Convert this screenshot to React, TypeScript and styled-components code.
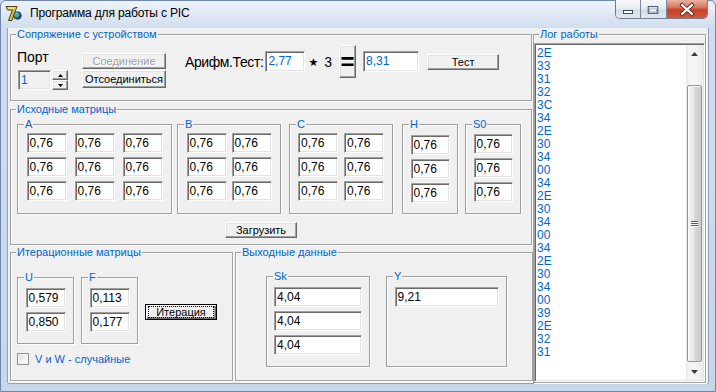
import styled, { createGlobalStyle, css } from "styled-components";

const BLUE = "#0066cc";
const FACE = "#f0f0f0";

const GlobalStyle = createGlobalStyle`
  * { box-sizing: border-box; }
  html, body { margin: 0; padding: 0; overflow: hidden; }
  body {
    font-family: "Liberation Sans", Arial, sans-serif;
    font-size: 11px;
    color: #000;
    background: #c9d9ee;
  }
`;

const sunken = css`
  border: 1px solid;
  border-color: #a0a0a0 #ffffff #ffffff #a0a0a0;
  box-shadow: inset 1px 1px 0 #696969, inset -1px -1px 0 #e3e3e3;
`;

const raised = css`
  border: 1px solid;
  border-color: #ffffff #696969 #696969 #ffffff;
  box-shadow: inset -1px -1px 0 #a0a0a0, inset 1px 1px 0 #e3e3e3;
  background: ${FACE};
`;

const matrices = [
  { name: "A", cols: 3, w: 155, ml: 0, gap: 8, top: 2 },
  { name: "B", cols: 2, w: 104, ml: 5, gap: 5, top: 2 },
  { name: "C", cols: 2, w: 104, ml: 8, gap: 6, top: 2 },
  { name: "H", cols: 1, w: 56, ml: 9, gap: 0, top: 4 },
  { name: "S0", cols: 1, w: 56, ml: 7, gap: 0, top: 3 },
];

const logLines = [
  "2E", "33", "31", "32", "3C", "34", "2E", "30", "34", "00", "34", "2E",
  "30", "34", "00", "34", "2E", "30", "34", "00", "39", "2E", "32", "31",
];

export default function App() {
  return (
    <>
      <GlobalStyle />
      <Window>
        <TitleBar>
          <AppIcon />
          <Title>Программа для работы с PIC</Title>
          <CaptionGroup>
            <CaptionButton $w={24}>
              <svg width="24" height="18" viewBox="0 0 24 18">
                <rect x="7.5" y="10.5" width="9" height="3" fill="#fff" stroke="#3d4b5e" />
              </svg>
            </CaptionButton>
            <CaptionButton $w={26}>
              <svg width="26" height="18" viewBox="0 0 26 18">
                <rect x="7.5" y="6.5" width="10" height="7" fill="none" stroke="#3d4b5e" />
                <rect x="9" y="9" width="7" height="3" fill="#fff" stroke="#8d9aad" strokeWidth="0.8" />
              </svg>
            </CaptionButton>
            <CaptionButton $w={41} $close>
              <svg width="41" height="18" viewBox="0 0 41 18">
                <path d="M15.5 5 L25.5 14 M25.5 5 L15.5 14" stroke="#5a2418" strokeWidth="4" strokeLinecap="square" />
                <path d="M15.5 5 L25.5 14 M25.5 5 L15.5 14" stroke="#fff" strokeWidth="2.2" strokeLinecap="square" />
              </svg>
            </CaptionButton>
          </CaptionGroup>
        </TitleBar>

        <Client>
          <LeftColumn>
            <Group $w={522} $h={73}>
              <Caption>Сопряжение с устройством</Caption>
              <ConnRow>
                <PortBlock>
                  <PortLabel>Порт</PortLabel>
                  <PortControls>
                    <TextBox $w={33} $h={20} $blue $disabled>
                      1
                    </TextBox>
                    <Spinner>
                      <SpinButton>
                        <svg width="5" height="3" viewBox="0 0 5 3">
                          <path d="M2.5 0 L5 3 H0 Z" fill="#000" />
                        </svg>
                      </SpinButton>
                      <SpinButton>
                        <svg width="5" height="3" viewBox="0 0 5 3">
                          <path d="M0 0 H5 L2.5 3 Z" fill="#000" />
                        </svg>
                      </SpinButton>
                    </Spinner>
                  </PortControls>
                </PortBlock>
                <ConnButtons>
                  <Button $w={84} $h={16} disabled>
                    Соединение
                  </Button>
                  <Button $w={84} $h={18}>
                    Отсоединиться
                  </Button>
                </ConnButtons>
                <ArithRow>
                  <ArithLabel>Арифм.Тест:</ArithLabel>
                  <TextBox $w={40} $h={21} $blue $ml={2}>
                    2,77
                  </TextBox>
                  <Times>
                    <Star>★</Star>3
                  </Times>
                  <EqButton>=</EqButton>
                  <TextBox $w={56} $h={21} $blue $ml={7}>
                    8,31
                  </TextBox>
                  <Button $w={72} $h={16} $ml={8}>
                    Тест
                  </Button>
                </ArithRow>
              </ConnRow>
            </Group>

            <Group $w={522} $h={142}>
              <Caption>Исходные матрицы</Caption>
              <MatrixRow>
                {matrices.map((m) => (
                  <SubBox key={m.name} $w={m.w} $h={96} $ml={m.ml} $top={m.top}>
                    <SubCaption>{m.name}</SubCaption>
                    <Matrix $cols={m.cols} $gap={m.gap}>
                      {Array.from({ length: m.cols * 3 }, (_, i) => (
                        <TextBox key={i} $w={m.cols === 1 ? 39 : 40}>
                          0,76
                        </TextBox>
                      ))}
                    </Matrix>
                  </SubBox>
                ))}
              </MatrixRow>
              <Button $w={72} $h={16} $ml={214} $mt={8}>
                Загрузить
              </Button>
            </Group>

            <BottomRow>
              <Group $w={223} $h={135}>
                <Caption>Итерационные матрицы</Caption>
                <IterRow>
                  <SubBox $w={57} $h={73} $top={4}>
                    <SubCaption>U</SubCaption>
                    <Matrix $cols={1} $gap={0}>
                      <TextBox $w={40}>0,579</TextBox>
                      <TextBox $w={40}>0,850</TextBox>
                    </Matrix>
                  </SubBox>
                  <SubBox $w={57} $h={73} $ml={7} $top={4}>
                    <SubCaption>F</SubCaption>
                    <Matrix $cols={1} $gap={0}>
                      <TextBox $w={40}>0,113</TextBox>
                      <TextBox $w={40}>0,177</TextBox>
                    </Matrix>
                  </SubBox>
                  <DefaultButton>
                    <FocusText>Итерация</FocusText>
                  </DefaultButton>
                </IterRow>
                <CheckRow>
                  <CheckBox />
                  <CheckLabel>V и W - случайные</CheckLabel>
                </CheckRow>
              </Group>

              <Group $h={135}>
                <Caption>Выходные данные</Caption>
                <OutRow>
                  <SubBox $w={104} $h={97} $top={4}>
                    <SubCaption>Sk</SubCaption>
                    <Matrix $cols={1} $gap={0}>
                      <TextBox $w={88}>4,04</TextBox>
                      <TextBox $w={88}>4,04</TextBox>
                      <TextBox $w={88}>4,04</TextBox>
                    </Matrix>
                  </SubBox>
                  <SubBox $w={121} $h={97} $ml={16} $top={4}>
                    <SubCaption>Y</SubCaption>
                    <Matrix $cols={1} $gap={0}>
                      <TextBox $w={104}>9,21</TextBox>
                    </Matrix>
                  </SubBox>
                </OutRow>
              </Group>
            </BottomRow>
          </LeftColumn>

          <Group $w={173} $h={355}>
            <Caption>Лог работы</Caption>
            <ListBox>
              <ListItems>
                {logLines.map((l, i) => (
                  <ListItem key={i}>{l}</ListItem>
                ))}
              </ListItems>
              <ScrollBar>
                <ScrollArrow>
                  <svg width="7" height="4" viewBox="0 0 7 4">
                    <path d="M3.5 0 L7 4 H0 Z" fill="#3c3c3c" />
                  </svg>
                </ScrollArrow>
                <Track>
                  <Thumb>
                    <Grip />
                    <Grip />
                    <Grip />
                  </Thumb>
                </Track>
                <ScrollArrow>
                  <svg width="7" height="4" viewBox="0 0 7 4">
                    <path d="M0 0 H7 L3.5 4 Z" fill="#3c3c3c" />
                  </svg>
                </ScrollArrow>
              </ScrollBar>
            </ListBox>
          </Group>
        </Client>
      </Window>
    </>
  );
}

function AppIcon() {
  return (
    <IconBox>
      <svg width="17" height="17" viewBox="0 0 17 17">
        <defs>
          <radialGradient id="globe" cx="0.35" cy="0.35" r="0.7">
            <stop offset="0" stopColor="#9fe0ff" />
            <stop offset="0.5" stopColor="#2f7fc0" />
            <stop offset="1" stopColor="#0d2f55" />
          </radialGradient>
        </defs>
        <path d="M1 1.5 H12 L7 15.5 H3.5 L7.5 5 H2.5 Z" fill="#d9c43a" stroke="#4f4512" strokeWidth="1" />
        <path d="M3 3 H10" stroke="#fff7b0" strokeWidth="1" />
        <circle cx="12.5" cy="10.5" r="3.8" fill="url(#globe)" stroke="#123" strokeWidth="0.6" />
        <path d="M10.5 9 Q12.5 8 14 10 Q13 12 11 12" fill="#4caf50" opacity="0.85" />
      </svg>
    </IconBox>
  );
}

const Window = styled.div`
  width: 716px;
  height: 392px;
  display: flex;
  flex-direction: column;
  border: 1px solid #7088a8;
  border-radius: 6px 6px 0 0;
  background: linear-gradient(to bottom, #eef3fa 0, #dfe8f4 14px, #d0ddef 27px, #c6d7ec 100%);
`;

const TitleBar = styled.div`
  height: 27px;
  display: flex;
  align-items: flex-start;
  padding-left: 4px;
`;

const IconBox = styled.div`
  width: 17px;
  height: 17px;
  margin-top: 4px;
`;

const Title = styled.span`
  margin-left: 8px;
  margin-top: 5px;
  font-size: 12px;
  line-height: 14px;
  letter-spacing: -0.15px;
  color: #000;
`;

const CaptionGroup = styled.div`
  margin-left: auto;
  margin-right: 7px;
  margin-top: -1px;
  height: 19px;
  display: flex;
  border: 1px solid #6f7d92;
  border-top: 0;
  border-radius: 0 0 5px 5px;
  overflow: hidden;
`;

const CaptionButton = styled.div<{ $w: number; $close?: boolean }>`
  width: ${(p) => p.$w}px;
  height: 18px;
  display: flex;
  & + & {
    border-left: 1px solid #7b889b;
  }
  background: ${(p) =>
    p.$close
      ? "linear-gradient(to bottom, #eab1a2 0, #d9775f 40%, #c6412a 55%, #d4593c 100%)"
      : "linear-gradient(to bottom, #f7f9fc 0, #e9eef5 45%, #d3dce8 55%, #e2e8f1 100%)"};
`;

const Client = styled.div`
  flex: 1;
  margin: 0 7px 8px;
  display: flex;
  background: ${FACE};
  box-shadow: -1px 0 0 #8fa3bf, 1px 0 0 #8fa3bf, 0 1px 0 #8fa3bf;
`;

const LeftColumn = styled.div`
  width: 525px;
  padding-left: 2px;
  display: flex;
  flex-direction: column;
  gap: 2px;
`;

const Group = styled.fieldset<{ $w?: number; $h: number }>`
  margin: 0;
  padding: 0;
  min-width: 0;
  ${(p) => (p.$w ? `width: ${p.$w}px;` : "flex: 1;")}
  height: ${(p) => p.$h}px;
  border: 1px solid #a0a0a0;
  box-shadow: inset 1px 1px 0 #fff, 1px 1px 0 #fff;
  display: flex;
  flex-direction: column;
  align-items: flex-start;
`;

const Caption = styled.legend`
  margin-left: 5px;
  padding: 0 1px;
  color: ${BLUE};
  font-size: 11px;
  line-height: 13px;
  background: ${FACE};
`;

const SubBox = styled.fieldset<{ $w: number; $h: number; $ml?: number; $top: number }>`
  margin: 0 0 0 ${(p) => p.$ml ?? 0}px;
  padding: ${(p) => p.$top}px 0 0;
  min-width: 0;
  width: ${(p) => p.$w}px;
  height: ${(p) => p.$h}px;
  border: 1px solid #a0a0a0;
  box-shadow: inset 1px 1px 0 #fff, 1px 1px 0 #fff;
  display: flex;
  flex-direction: column;
  align-items: center;
`;

const SubCaption = styled(Caption)`
  margin-left: 6px;
`;

const Matrix = styled.div<{ $cols: number; $gap: number }>`
  display: grid;
  grid-template-columns: repeat(${(p) => p.$cols}, auto);
  column-gap: ${(p) => p.$gap}px;
  row-gap: 4px;
`;

const TextBox = styled.div<{ $w: number; $h?: number; $blue?: boolean; $disabled?: boolean; $ml?: number }>`
  ${sunken};
  width: ${(p) => p.$w}px;
  height: ${(p) => p.$h ?? 20}px;
  margin-left: ${(p) => p.$ml ?? 0}px;
  padding-left: 2px;
  background: ${(p) => (p.$disabled ? FACE : "#fff")};
  color: ${(p) => (p.$blue ? BLUE : "#000")};
  font-size: 12px;
  line-height: ${(p) => (p.$h ?? 20) - 2}px;
  white-space: nowrap;
`;

const Button = styled.button<{ $w: number; $h: number; $ml?: number; $mt?: number }>`
  ${raised};
  width: ${(p) => p.$w}px;
  height: ${(p) => p.$h}px;
  margin: ${(p) => p.$mt ?? 0}px 0 0 ${(p) => p.$ml ?? 0}px;
  padding: 0;
  font-family: inherit;
  font-size: 11px;
  line-height: ${(p) => p.$h - 2}px;
  color: #000;
  &:disabled {
    color: #a0a0a0;
    text-shadow: 1px 1px 0 #fff;
  }
`;

const ConnRow = styled.div`
  display: flex;
  align-items: flex-start;
  padding-left: 6px;
`;

const PortBlock = styled.div`
  margin-top: 8px;
  display: flex;
  flex-direction: column;
  gap: 5px;
`;

const PortLabel = styled.span`
  font-size: 14px;
  line-height: 16px;
`;

const PortControls = styled.div`
  display: flex;
  gap: 1px;
  margin-left: 1px;
`;

const Spinner = styled.div`
  display: flex;
  flex-direction: column;
`;

const SpinButton = styled.div`
  ${raised};
  width: 16px;
  height: 10px;
  display: flex;
  align-items: center;
  justify-content: center;
`;

const ConnButtons = styled.div`
  margin: 12px 0 0 14px;
  display: flex;
  flex-direction: column;
  gap: 1px;
`;

const ArithRow = styled.div`
  margin: 4px 0 0 19px;
  height: 33px;
  display: flex;
  align-items: center;
`;

const ArithLabel = styled.span`
  font-size: 14px;
  letter-spacing: -0.4px;
  white-space: nowrap;
`;

const Times = styled.span`
  margin-left: 3px;
  font-size: 14px;
  white-space: nowrap;
`;

const Star = styled.span`
  font-family: "DejaVu Sans", sans-serif;
  font-size: 11px;
  vertical-align: 1px;
  margin-right: 6px;
`;

const EqButton = styled.div`
  ${raised};
  width: 17px;
  height: 33px;
  margin-left: 7px;
  display: flex;
  align-items: center;
  justify-content: center;
  font-size: 24px;
  font-weight: 700;
  line-height: 1;
`;

const MatrixRow = styled.div`
  display: flex;
  padding-left: 6px;
  margin-top: 2px;
`;

const BottomRow = styled.div`
  display: flex;
  gap: 2px;
  margin-top: -1px;
`;

const IterRow = styled.div`
  display: flex;
  align-items: flex-start;
  padding-left: 6px;
  margin-top: 12px;
`;

const DefaultButton = styled.div`
  width: 72px;
  height: 16px;
  margin: 33px 0 0 7px;
  border: 1px solid #000;
  background: ${FACE};
  box-shadow: inset 1px 1px 0 #fff, inset -1px -1px 0 #696969, inset -2px -2px 0 #a0a0a0;
  display: flex;
  align-items: center;
  justify-content: center;
`;

const FocusText = styled.span`
  width: 64px;
  outline: 1px dotted #000;
  text-align: center;
  font-size: 11px;
  line-height: 10px;
`;

const CheckRow = styled.div`
  display: flex;
  align-items: center;
  padding-left: 6px;
  margin-top: 9px;
`;

const CheckBox = styled.div`
  width: 12px;
  height: 12px;
  border: 1px solid #8e8f8f;
  background: linear-gradient(135deg, #d9d9d9 0, #f7f7f7 70%, #ffffff 100%);
  box-shadow: inset 0 0 0 1px #f4f4f4;
`;

const CheckLabel = styled.span`
  margin-left: 6px;
  color: ${BLUE};
  font-size: 11px;
`;

const OutRow = styled.div`
  display: flex;
  padding-left: 30px;
  margin-top: 11px;
`;

const ListBox = styled.div`
  ${sunken};
  width: 171px;
  height: 339px;
  margin-top: 2px;
  background: #fff;
  display: flex;
`;

const ListItems = styled.div`
  flex: 1;
  padding: 3px 0 0 2px;
  color: ${BLUE};
  font-size: 12px;
  line-height: 13px;
`;

const ListItem = styled.div`
  height: 13px;
`;

const ScrollBar = styled.div`
  width: 17px;
  margin: 1px 1px 1px 0;
  display: flex;
  flex-direction: column;
  background: linear-gradient(to right, #e3e3e3 0, #f3f3f3 2px, #f5f5f5 50%, #ececec 100%);
`;

const ScrollArrow = styled.div`
  height: 17px;
  display: flex;
  align-items: center;
  justify-content: center;
`;

const Track = styled.div`
  flex: 1;
  display: flex;
  flex-direction: column;
  align-items: center;
`;

const Thumb = styled.div`
  width: 15px;
  height: 277px;
  margin-top: 23px;
  border: 1px solid #959595;
  border-radius: 2px;
  background: linear-gradient(to right, #f4f4f4 0, #e6e6e6 45%, #d6d6d6 55%, #cbcbcb 100%);
  box-shadow: inset 1px 1px 0 #fdfdfd;
  display: flex;
  flex-direction: column;
  align-items: center;
  justify-content: center;
  gap: 1px;
`;

const Grip = styled.div`
  width: 7px;
  height: 1px;
  background: #5c5c5c;
  box-shadow: 0 1px 0 #f8f8f8;
`;
